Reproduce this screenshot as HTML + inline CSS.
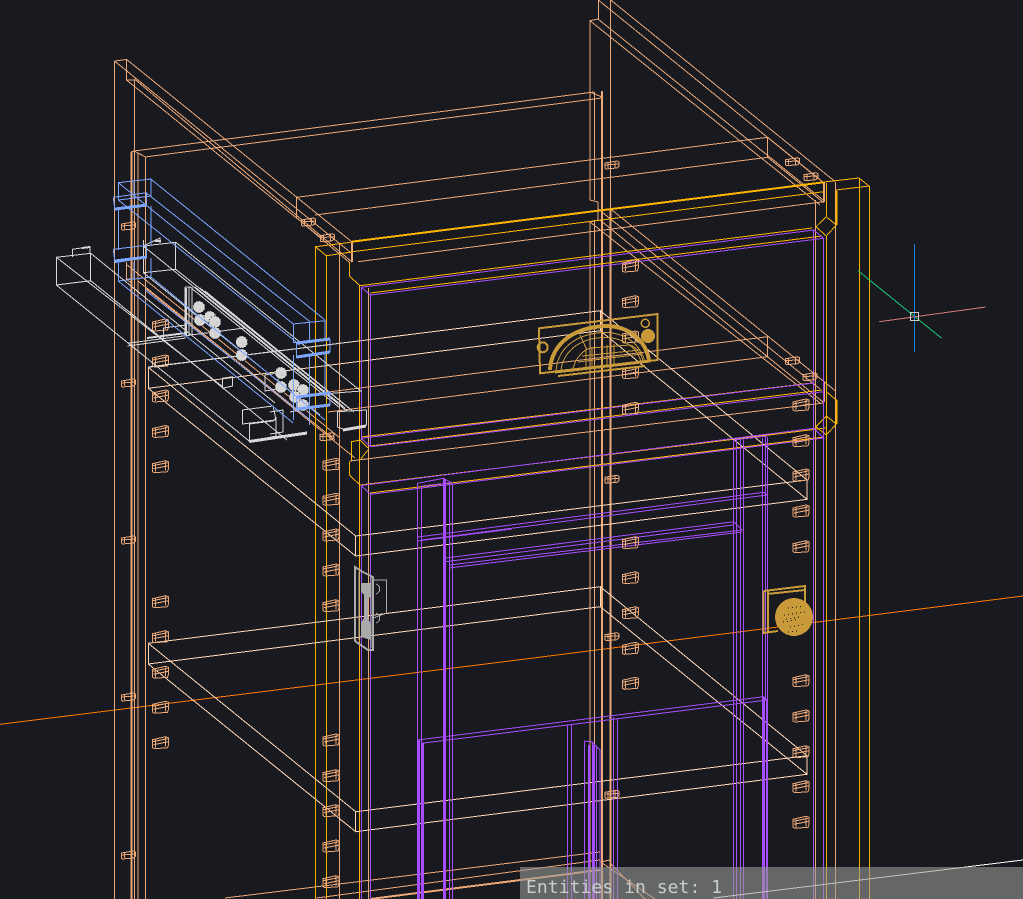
<!DOCTYPE html>
<html><head><meta charset="utf-8"><style>
html,body{margin:0;padding:0;background:#181a1f;width:1023px;height:899px;overflow:hidden}
svg{position:absolute;left:0;top:0;display:block}
#msg{position:absolute;left:520px;top:867px;width:503px;height:32px;background:rgba(154,154,150,.6)}
#t{position:absolute;left:526px;top:878px;font:18px/20px "DejaVu Sans Mono","Liberation Mono",monospace;letter-spacing:.06px;color:#c9cfcf;white-space:pre}
</style></head><body>
<svg width="1023" height="899" viewBox="0 0 1023 899" fill="none" shape-rendering="crispEdges">
<defs>
<g id="p" stroke="#eda878" fill="none"><path d="M-8-3 5-6 8-5V2L7 5-6 6-8 5ZM-8-1 7-4M-7 2 8-1M-5-3-5 5M5-5 5 4"/></g>
<g id="s" stroke="#eda878" fill="none"><path d="M-7-2 5-4 7-3V1L5 3-6 4-7 3ZM-4-2-4 3M-7 0 7-1M3-4 3 3"/></g>
<g id="b"><circle r="6" fill="#d6d6d6"/><circle r="6" stroke="#181a1f" stroke-dasharray="1 2"/><circle cx="1" cy="2" r=".6" fill="#e8a878"/></g>
</defs>

<!-- orange axis -->
<path stroke="#ff7a00" d="M0 724.3 512 660.7 1023 596"/>

<!-- peach structure -->
<path stroke="#eda878" d="
M114.5 61V899M126.5 59V80H134.5V899M131 152V899M138 153V899M145.5 157V899
M114.5 61 126.7 59.5M131 152 134 151 145.5 157
M126.7 59.5 352 242M114.5 61 350 252M126.5 80 320 237M134.5 79 352 262
M134 151 594 92M145 157 602 98
M296.7 197.3 767.7 137.3V157.3L315 215M296.7 197.3V218L349 262
M767.7 137.3 823.7 182.7M767.7 157.3 823.7 202.7
M598.3 0V19L590 20.7V200L598 202V220L590 222V899M594.5 92V200M594.5 220V899M610.5 0V209
M610.7 0 835 181.5M598.3 0 820 180M590 20.7 820 205M598 19 823 200
M590 92 602 97
M610.7 209 835 390.5M598.3 209 820 389M590 222 820 403M600 220 823 402
M767.7 336.7 512 368.7 296.7 396M767.7 356.7 512 388.7 328 412M767.7 336.7V356.7
M358 261.7 823.7 201.7M350 461 823.7 403
M339.3 243V899M368.5 288V899M815.5 200V899M835.5 182V899
M126.5 262V279H134.5M126.5 279 132 284
M138 281 335 440M145 288 355 458M126 264 340 438
M225 898 600 852M316.7 898 600 860M600 850V862M610 860 600 862M600.3 861.7 655 899M610 863 645 899"/>
<path stroke="#eda878" stroke-width="2" d="M602 91V899M610.5 209V899M370 899 600 870M131.5 152V899M352 242V262M824 182V202M824 382V402"/>

<!-- yellow -->
<path stroke="#ffb400" d="
M315.3 246.7V899M326.3 255.7V899M315.3 246.7 350.7 242.3M326.3 255.7 352 252M315.3 246.7 326.3 255.7
M352.7 251.7 823.7 191.7
M823.7 182 859 178 869 186 836 190
M859.7 178V899M869.7 186V899M826.7 236V899
M826.3 216.7 836.3 225 826.3 236 816 226.7ZM826.3 183V216
M826.3 391.7 836.3 400V424L826.3 435 816 426.7 826.3 416 836.3 424M826.3 381V391
M349.3 262V276L360 285.7 512 266 812 228
M370.7 293 822 236
M361 437 812 383M370.7 446 822 390
M351.7 441.7 360 440 368 448M368 450 360 460M349.3 461.7V475L360 485 826 428M370 493 824 437
M359.5 285V899M351.7 441V461"/>
<path stroke="#ffb400" stroke-width="2" d="M351.7 241.7 823.7 182.3M836.3 191V225M836.3 400V424"/>

<!-- pale shelves -->
<path stroke="#ffd8b8" d="
M148.3 367.3 600.3 310.7V330.7L148.3 388.3ZM148.3 367.3 355.7 536V556L148.3 388.3M355.7 536 807 480V499.3L355.7 556
M600.3 310.7 807 480M600.3 330.7 807 499.3
M148.3 643.3 600.3 586.7V606.7L148.3 664ZM148.3 643.3 355.7 811.7V831.7L148.3 664M355.7 811.7 807 755.7V774.3L355.7 831.7
M600.3 586.7 807 755.7M600.3 606.7 807 774.3"/>

<!-- purple -->
<path stroke="#a64dff" d="
M361 287.3 813.7 230 823.7 238.3 370.7 295 361 287.3M361.5 287V440M370.5 295V447M813.5 230V899M823.5 238V899
M361 438.3 813.7 383M370.7 446.7 823.7 391.7M361 438.3 370.7 446.7
M361 485.5 813.7 428.3 823.7 438 370.7 494.3 361 485.5M361.5 485V899M370.5 494V899
M417.7 483.3 443.3 478.3 452.3 483M421.7 486 449.3 483M417.5 483V899M421.5 486V899M445.5 480V899M449.5 483V899M452.5 483V899
M733.7 440 767 436M733.5 440V899M736.5 440V899M740.5 440V899M743.5 440V899M762.5 438V899M765.5 436V700M767.5 437V899
M417.7 537 763.7 492.3 767 495 421.7 540M417.7 541 512 529M421.7 537V540
M443.3 558.3 733.7 521.7 742 530 449.3 565M443.3 562 733 525M449 568 742 532
M417.7 740 763.7 696.7 767 700 421.7 743.3
M567.5 725V899M571.5 725V899M613.5 717V899M617.5 718V899
M584.5 741 592 742 600 750V899M584.5 741V899M592.5 742V899M596.5 747V899"/>
<path stroke="#a64dff" stroke-width="2" d="M444 478V899M419 740V899M423 743V899M764 697V899M767 700V899M594 745V899M589 745V899"/>

<!-- bottom line -->
<path stroke="#ffffff" d="M713.7 898 1023 860"/>

<!-- pegs -->
<use href="#p" x="160.5" y="325"/><use href="#p" x="160.5" y="361"/><use href="#p" x="160.5" y="396"/><use href="#p" x="160.5" y="431.5"/><use href="#p" x="160.5" y="466.7"/><use href="#p" x="160.5" y="601.7"/><use href="#p" x="160.5" y="636.7"/><use href="#p" x="160.5" y="672.3"/><use href="#p" x="160.5" y="707.3"/><use href="#p" x="160.5" y="742.7"/>
<use href="#s" x="128.5" y="226"/><use href="#s" x="128.5" y="383"/><use href="#s" x="128.5" y="540"/><use href="#s" x="128.5" y="697"/><use href="#s" x="128.5" y="855"/>
<use href="#s" x="308.3" y="222"/><use href="#s" x="327.3" y="237.7"/><use href="#s" x="327" y="436.7"/>
<use href="#p" x="331" y="464.3"/><use href="#p" x="331" y="499.3"/><use href="#p" x="331" y="535"/><use href="#p" x="331" y="570"/><use href="#p" x="331" y="605.7"/><use href="#p" x="331" y="740"/><use href="#p" x="331" y="775.7"/><use href="#p" x="331" y="810.7"/><use href="#p" x="331" y="846"/><use href="#p" x="331" y="881.7"/>
<use href="#p" x="630.3" y="266"/><use href="#p" x="630.3" y="301.7"/><use href="#p" x="630.3" y="337"/><use href="#p" x="630.3" y="372.7"/><use href="#p" x="630.3" y="408.3"/><use href="#p" x="630.3" y="542.7"/><use href="#p" x="630.3" y="577.7"/><use href="#p" x="630.3" y="612.7"/><use href="#p" x="630.3" y="648.3"/><use href="#p" x="630.3" y="683.3"/>
<use href="#s" x="612" y="165"/><use href="#s" x="612" y="479.3"/><use href="#s" x="612" y="636.7"/><use href="#s" x="612" y="794.3"/>
<use href="#p" x="801" y="405"/><use href="#p" x="801" y="440.7"/><use href="#p" x="801" y="475"/><use href="#p" x="801" y="511"/><use href="#p" x="801" y="546.7"/><use href="#p" x="801" y="680.7"/><use href="#p" x="801" y="716"/><use href="#p" x="801" y="751.7"/><use href="#p" x="801" y="786.7"/><use href="#p" x="801" y="822.3"/>
<use href="#s" x="792.7" y="161.7"/><use href="#s" x="811" y="176.7"/><use href="#s" x="792.7" y="360.7"/><use href="#s" x="810" y="376.7"/>

<!-- white assembly -->
<path stroke="#d8d8d8" d="
M56.3 257.3 90.7 253.3V280.7L56.3 285ZM56.3 257.3 223 387M56.3 285 250 441.7M90.7 253.3 275 403M90.7 280.7 287 440
M72.3 257V249.3L90 246.7V253
M143.3 246 175.7 242.3V269.3L143.3 272.7ZM143.3 246 347 411M143.3 272.7 320 415M175.7 242.3 361.7 391.7M175.7 269.3 345 405M143.3 240V246L160 238V243
M127.3 343.3 246.7 327.7M127.3 346 186 338M163.3 338V328L186 325
M185 287 190 287M185 287V336M189 287V336M192 287V336
M190 287 340 408M195 287 345 408M200 288 350 409M205 291 354 412
M222.3 378.3 232.7 376.7V386L222.3 388.3Z
M148 367 350 342
M242.3 410 273 406 276 420 242.3 424ZM249.3 424 273 421 276 418V436L249.3 441.7ZM270 412 283 410V432L270 434
M265 375 278 373V389L265 391ZM337.3 411.7 366.7 410V425L343 429 337.3 427Z
M290 392 300 390V410L290 412M310 395 361 391
"/>
<path stroke="#d8d8d8" stroke-width="3" d="M249.3 441.5 307 433M343 430 366 426"/>
<path stroke="#d8d8d8" stroke-width="2" d="M186 288V336M147 338 186 333M82 248 90 247M155 241 161 241"/>
<use href="#b" x="199" y="307"/><use href="#b" x="200" y="320"/><use href="#b" x="210" y="317"/><use href="#b" x="215" y="322"/><use href="#b" x="215" y="333"/>
<use href="#b" x="241.7" y="342"/><use href="#b" x="241.7" y="355"/><use href="#b" x="281" y="373"/><use href="#b" x="281" y="387"/><use href="#b" x="294" y="385"/><use href="#b" x="303" y="390"/><use href="#b" x="295" y="397"/><use href="#b" x="303" y="405"/>

<!-- blue -->
<path stroke="#7ea6ff" d="
M118.3 182.7 151 179V196L118.3 200ZM134 181V198
M113.3 197.3 146.7 192.7V206L115 210 113.3 197.3
M118.3 210V250M151 206V246M118.3 263V281L151 277V258M134 262V279
M113.3 249.3 146.7 245.3V257.3L115 262.7 113.3 249.3
M150.7 179 325 320M118.3 182.7 293.3 324M146.7 193.3 310 321.7M118.3 200 300 345M118.3 281 293.3 423M151 277 325 420M145 290 310 420
M293.3 324 325 320.7V340L293.3 342.7ZM309.5 322V341
M296.7 343.3 330 339.3V351.7L296.7 357.3ZM293.3 355V420M325 353V392M309.5 355V425
M296.7 397 330 392V405L296.7 410Z"/>
<path stroke="#7ea6ff" stroke-width="3" d="M115 209 147 205M115 261 147 257M297 343 330 339M297 357 330 352M297 397 330 393M297 409 330 405"/>

<!-- handle -->
<g stroke="#c89a3a">
<path stroke-width="2" d="M539 328.3 657.7 314V360L540 373.3Z"/>
<path stroke-width="4" d="M550 370C551 350 565 332 595 327 625 322 645 338 649 360"/>
<path d="M556 372C557 352 570 337 597 333 622 330 640 342 645 362M561 371C562 356 574 341 597 338 620 335 637 346 641 362"/>
<path d="M572 372C575 360 580 352 590 348L630 345C638 348 642 355 643 362M580 335 587 350M586 348V368M592 347V367M602 346V366M607 345V365M614 344V364M582 356 640 350M578 362 642 354"/>
<path stroke-width="3" d="M555 372 650 361"/>
<path stroke-width="2" d="M558 376 645 366"/>
<circle cx="542.7" cy="347.3" r="5" stroke-width="2"/><circle cx="645.3" cy="323.3" r="4" stroke-width="1.5"/><circle cx="648" cy="336" r="6" stroke-width="2" fill="#c89a3a"/>
</g>

<!-- knob -->
<g stroke="#c89a3a"><path stroke-width="2" d="M763.5 591 805 586V602M763.5 591V633L778 631M768 590V632M767 594 805 590"/>
<circle cx="794" cy="617" r="19" fill="#c89a3a" stroke="none"/></g>
<path stroke="#181a1f" stroke-dasharray="1 3" d="M788 608 803 606M784 615 805 612M786 619 800 617M783 622 796 620M790 627 806 624M788 632 798 631"/>

<!-- latch -->
<g stroke="#aaaaaa">
<path stroke-width="2" d="M355 567V641L368 650H373V577L361 571Z"/>
<path d="M359 572V640M371 576V648M373.3 580H386.7V613L373.3 618M376 584C381 586 381 592 376 594M376 613C381 615 381 621 376 623"/>
<path fill="#aaaaaa" stroke="none" d="M361 583H371V597L368 598V618L371 625V640L361 637V623L364 618V595L361 592Z"/>
</g>

<!-- UCS -->
<path stroke="#18c878" d="M858.3 271 941.7 338.3"/>
<path stroke="#d87a78" d="M879.3 321.7 985.7 307"/>
<path stroke="#1e7fd6" stroke-width="1" d="M914.5 244V352"/>
<rect x="910.5" y="312.5" width="8" height="8" stroke="#d0d0d0"/>
</svg>
<div id="msg"></div>
<div id="t">Entities in set: 1</div>
</body></html>
